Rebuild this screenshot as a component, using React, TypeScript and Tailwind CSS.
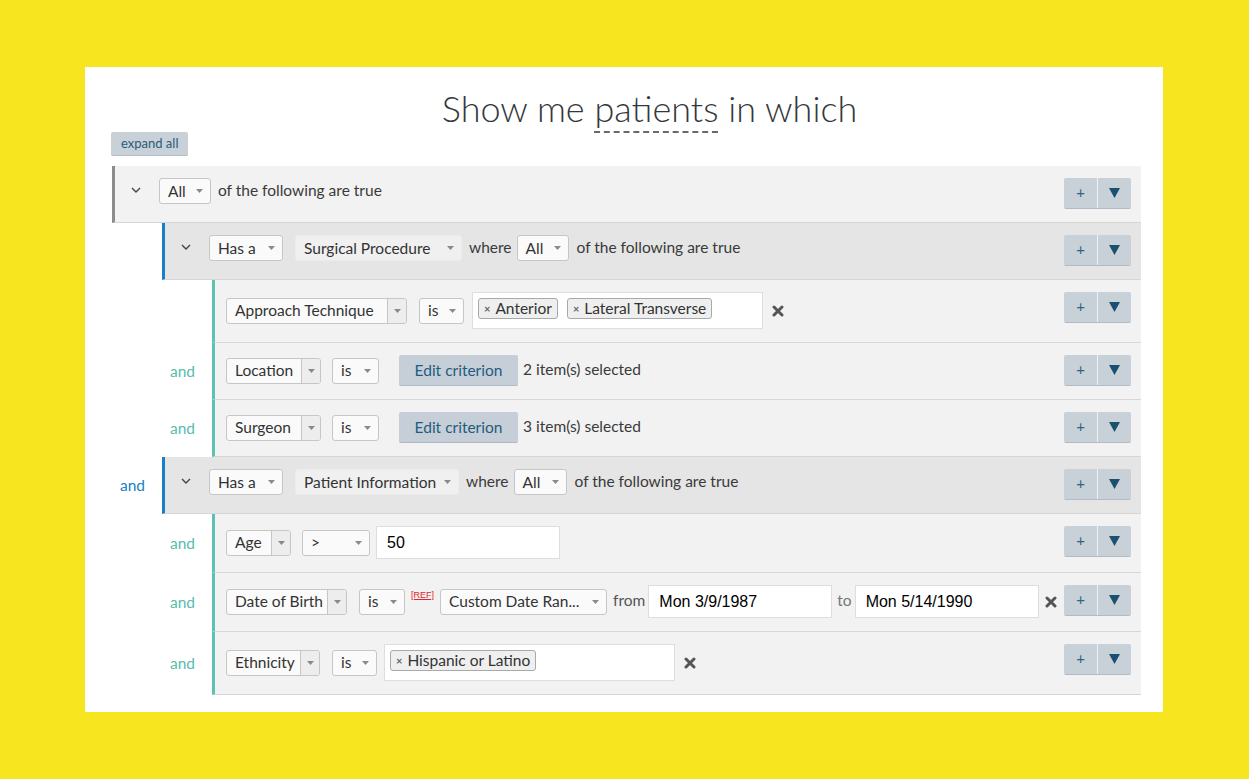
import clsx from 'clsx';
import type { ReactNode } from 'react';

// Query builder: nested groups of criteria rows

function Chevron() {
  return (
    <div className="w-[44px] pl-[16px] flex items-center mb-[3px]">
      <svg width="10" height="6" viewBox="0 0 10 6">
        <polyline points="1,1 5,5 9,1" fill="none" stroke="#444" strokeWidth="1.4" />
      </svg>
    </div>
  );
}

function Arrow() {
  return (
    <svg width="7" height="4" viewBox="0 0 7 4">
      <path d="M0 0 L7 0 L3.5 4 Z" fill="#8a8a8a" />
    </svg>
  );
}

interface SelectProps {
  label: string;
  width: number;
  variant?: 'plain' | 'flat' | 'split';
  className?: string;
}

function Select({ label, width, variant = 'plain', className }: SelectProps) {
  if (variant === 'split') {
    return (
      <div
        className={clsx('flex h-[26px] border border-[#c6c6c6] rounded-[3px] bg-[#fafafa] overflow-hidden', className)}
        style={{ width }}
      >
        <div className="flex-1 flex items-center pl-[8px] text-[#333]">{label}</div>
        <div className="w-[19px] border-l border-[#c6c6c6] bg-[#ededed] flex items-center justify-center">
          <Arrow />
        </div>
      </div>
    );
  }
  return (
    <div
      className={clsx(
        'flex h-[26px] items-center justify-between pl-[8px] pr-[7px] rounded-[3px] text-[#333]',
        variant === 'flat' ? 'bg-[#f0f0f0] border border-[#ebebeb]' : 'bg-[#fafafa] border border-[#c6c6c6]',
        className
      )}
      style={{ width }}
    >
      <span>{label}</span>
      <Arrow />
    </div>
  );
}

function Actions() {
  return (
    <div className="flex h-[31px] shrink-0 rounded-[2px] overflow-hidden border-b border-[#b0bbc5]">
      <div className="w-[33px] bg-[#c8d0d8] flex items-center justify-center text-[#2e6485] text-[15px] leading-none pb-[1px]">
        +
      </div>
      <div className="w-px bg-[#eef1f4]" />
      <div className="w-[33px] bg-[#c8d0d8] flex items-center justify-center">
        <svg width="11" height="10" viewBox="0 0 11 10">
          <path d="M0 0 L11 0 L5.5 10 Z" fill="#1b5170" />
        </svg>
      </div>
    </div>
  );
}

function Remove({ className }: { className?: string }) {
  return (
    <svg width="12" height="12" viewBox="0 0 12 12" className={className}>
      <path d="M2 2 L10 10 M10 2 L2 10" stroke="#555" strokeWidth="3" strokeLinecap="round" />
    </svg>
  );
}

function Tag({ label }: { label: string }) {
  return (
    <span className="flex items-center h-[21px] px-[5px] gap-[5px] border border-[#a9a9a9] rounded-[3px] bg-[#efefef] text-[#333]">
      <span className="text-[11px] font-bold text-[#666]">×</span>
      {label}
    </span>
  );
}

function TagBox({ tags, className }: { tags: string[]; className?: string }) {
  return (
    <div
      className={clsx('flex items-start gap-[9px] w-[291px] h-[37px] pt-[5px] pl-[5px] bg-white border border-[#dedede]', className)}
    >
      {tags.map((t) => (
        <Tag key={t} label={t} />
      ))}
    </div>
  );
}

function Input({ value, className }: { value: string; className?: string }) {
  return (
    <div
      className={clsx(
        "flex items-center w-[184px] h-[33px] pl-[10px] bg-white border border-[#dedede] font-['Liberation_Sans',sans-serif] text-[16px] text-black",
        className
      )}
    >
      {value}
    </div>
  );
}

function EditButton({ className }: { className?: string }) {
  return (
    <div
      className={clsx(
        'flex items-center justify-center w-[119px] h-[31px] bg-[#c6cfd7] border-b border-[#aeb9c3] rounded-[2px] text-[#1f5c7f]',
        className
      )}
    >
      Edit criterion
    </div>
  );
}

function Row({ border, bg, children }: { border: string; bg: string; children: ReactNode }) {
  return (
    <div
      className={clsx(
        'flex flex-1 items-start justify-between border-l-[3px] border-b border-b-[#d6d6d6] pt-3 pb-[13px] pr-[10px]',
        border,
        bg
      )}
    >
      <div className="flex items-center">{children}</div>
      <Actions />
    </div>
  );
}

function Gutter({ label, color }: { label?: string; color?: string }) {
  return <div className={clsx('w-[50px] shrink-0 flex items-center pl-[8px]', color)}>{label}</div>;
}

function Criterion({ and, children }: { and?: boolean; children: ReactNode }) {
  return (
    <div className="flex">
      <Gutter label={and ? 'and' : undefined} color="text-[#56bdac]" />
      <Row border="border-l-[#5cc2b1]" bg="bg-[#f2f2f2]">
        <div className="w-[11px]" />
        {children}
      </Row>
    </div>
  );
}

function GroupHeader({ and, entity, entityWidth, allWidth }: { and?: boolean; entity: string; entityWidth: number; allWidth: number }) {
  return (
    <div className="flex">
      <Gutter label={and ? 'and' : undefined} color="text-[#1a7fc4]" />
      <Row border="border-l-[#1a7fc4]" bg="bg-[#e5e5e5]">
        <Chevron />
        <Select label="Has a" width={74} />
        <Select label={entity} width={entityWidth} variant="flat" className="ml-[12px]" />
        <span className="ml-[7px] mb-[2px]">where</span>
        <Select label="All" width={allWidth} className="ml-[5px]" />
        <span className="ml-[8px] mb-[2px]">of the following are true</span>
      </Row>
    </div>
  );
}

export default function App() {
  return (
    <div className="min-h-screen bg-[#f7e61f] pt-[67px] pl-[85px] font-['Lato',sans-serif] text-[15.5px] text-[#3a3a3a]">
      <div className="w-[1078px] bg-white pt-[19px] pl-[27px] pr-[22px] pb-[17px]">
        <div className="h-[45px] leading-[44px] text-center pl-[46px] text-[36px] font-light text-[#33383d]">
          Show me{' '}
          <span className="inline-block leading-none pb-[5px] border-b-2 border-dashed border-[#6a6a6a]">patients</span>{' '}
          in which
        </div>
        <div className="inline-flex items-center h-[24px] -ml-px px-[10px] bg-[#c8d0d8] border-b border-[#b3bdc6] rounded-[2px] text-[13px] text-[#2a5b7b]">
          expand all
        </div>

        <div className="mt-[10px]">
          <Row border="border-l-[#8c8c8c]" bg="bg-[#f2f2f2]">
            <Chevron />
            <Select label="All" width={52} />
            <span className="ml-[7px] mb-[2px]">of the following are true</span>
          </Row>

          <GroupHeader entity="Surgical Procedure" entityWidth={167} allWidth={52} />
          <div className="ml-[50px]">
            <Criterion>
              <Select label="Approach Technique" width={181} variant="split" />
              <Select label="is" width={45} className="ml-[12px]" />
              <TagBox tags={['Anterior', 'Lateral Transverse']} className="ml-[8px]" />
              <Remove className="ml-[9px]" />
            </Criterion>
            <Criterion and>
              <Select label="Location" width={95} variant="split" />
              <Select label="is" width={47} className="ml-[11px]" />
              <EditButton className="ml-[20px]" />
              <span className="ml-[5px] mb-[2px]">2 item(s) selected</span>
            </Criterion>
            <Criterion and>
              <Select label="Surgeon" width={95} variant="split" />
              <Select label="is" width={47} className="ml-[11px]" />
              <EditButton className="ml-[20px]" />
              <span className="ml-[5px] mb-[2px]">3 item(s) selected</span>
            </Criterion>
          </div>

          <GroupHeader and entity="Patient Information" entityWidth={164} allWidth={53} />
          <div className="ml-[50px]">
            <Criterion and>
              <Select label="Age" width={65} variant="split" />
              <Select label=">" width={68} className="ml-[11px]" />
              <Input value="50" className="ml-[6px]" />
            </Criterion>
            <Criterion and>
              <Select label="Date of Birth" width={121} variant="split" />
              <Select label="is" width={46} className="ml-[12px]" />
              <span className="self-start mt-[5px] ml-[6px] text-[9px] leading-[11px] text-[#e0242a] underline font-['Liberation_Sans',sans-serif]">
                [REF]
              </span>
              <Select label="Custom Date Ran..." width={167} className="ml-[6px]" />
              <span className="ml-[6px] mb-[2px] text-[#555]">from</span>
              <Input value="Mon 3/9/1987" className="ml-[3px]" />
              <span className="ml-[5px] mb-[2px] text-[#777]">to</span>
              <Input value="Mon 5/14/1990" className="ml-[3px]" />
              <Remove className="ml-[6px]" />
            </Criterion>
            <Criterion and>
              <Select label="Ethnicity" width={94} variant="split" />
              <Select label="is" width={45} className="ml-[12px]" />
              <TagBox tags={['Hispanic or Latino']} className="ml-[7px]" />
              <Remove className="ml-[9px]" />
            </Criterion>
          </div>
        </div>
      </div>
    </div>
  );
}
